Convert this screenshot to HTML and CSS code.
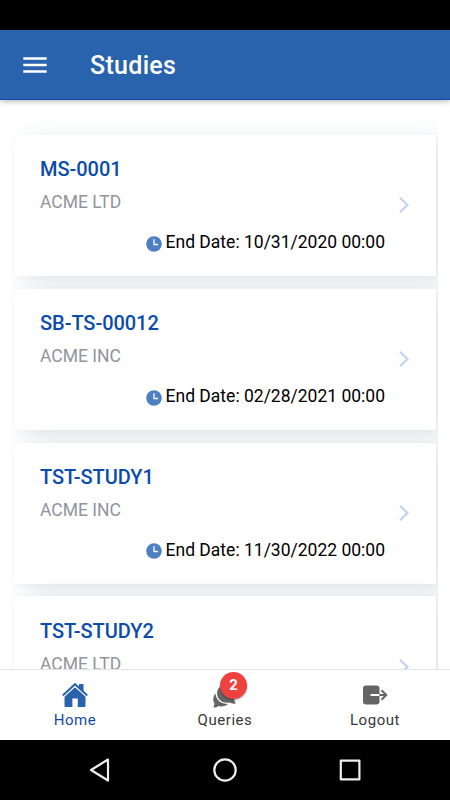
FILE: index.html
```html
<!DOCTYPE html>
<html lang="en">
<head>
  <meta charset="UTF-8" />
  <meta name="viewport" content="width=device-width, initial-scale=1" />
  <title>Studies</title>
  <link rel="stylesheet" href="styles.css">
</head>
<body>
  <div class="app">
    <div class="status-bar"></div>

    <header class="header">
      <button class="menu-btn" aria-label="Menu">
        <svg viewBox="0 0 24 18"><path d="M.3 2.500H23.700M.3 9H23.700M.3 15.500H23.700"/></svg>
      </button>
      <h1>Studies</h1>
    </header>

    <!-- STUDY LIST -->
    <main class="content">
      <div class="list">
        <article class="card">
          <div class="info">
            <h2>MS-0001</h2>
            <p class="company">ACME LTD</p>
            <p class="date"><svg class="clock" viewBox="0 0 16 16"><circle cx="8" cy="8" r="7.8"/><path d="M8 3.2V8.500H12"/></svg><span>End Date: 10/31/2020 00:00</span></p>
          </div>
          <svg class="arrow" viewBox="0 0 12 18"><path d="M2 1.8L9.5 9L2 16.2"/></svg>
        </article>
        <article class="card">
          <div class="info">
            <h2>SB-TS-00012</h2>
            <p class="company">ACME INC</p>
            <p class="date"><svg class="clock" viewBox="0 0 16 16"><circle cx="8" cy="8" r="7.8"/><path d="M8 3.2V8.500H12"/></svg><span>End Date: 02/28/2021 00:00</span></p>
          </div>
          <svg class="arrow" viewBox="0 0 12 18"><path d="M2 1.8L9.5 9L2 16.2"/></svg>
        </article>
        <article class="card">
          <div class="info">
            <h2>TST-STUDY1</h2>
            <p class="company">ACME INC</p>
            <p class="date"><svg class="clock" viewBox="0 0 16 16"><circle cx="8" cy="8" r="7.8"/><path d="M8 3.2V8.500H12"/></svg><span>End Date: 11/30/2022 00:00</span></p>
          </div>
          <svg class="arrow" viewBox="0 0 12 18"><path d="M2 1.8L9.5 9L2 16.2"/></svg>
        </article>
        <article class="card">
          <div class="info">
            <h2>TST-STUDY2</h2>
            <p class="company">ACME LTD</p>
          </div>
          <svg class="arrow" viewBox="0 0 12 18"><path d="M2 1.8L9.5 9L2 16.2"/></svg>
        </article>
      </div>
    </main>

    <!-- TABS -->
    <nav class="tabs">
      <a class="tab active">
        <svg viewBox="0 0 26 26">
          <path d="M17 2H21.500V10L17 6Z"/>
          <path d="M13 5L23.500 14.500V24Q23.500 25 22.500 25H15.800V16.500H10.400V25H3.500Q2.500 25 2.500 24V14.500Z"/>
          <path class="gap" d="M1 15L13 4.200L25 15"/>
          <path class="roof" d="M.8 13.400L13 2.200L25.200 13.400"/>
        </svg>
        <span>Home</span>
      </a>
      <a class="tab">
        <svg viewBox="0 0 26 26">
          <path d="M9 4C14 1 23 3 23 12Q23 15.500 22 17.500L23.700 21.500Q20 22 17.500 20.500C10 22 5 17 5 11Q5 7 9 4Z"/>
          <path d="M3.500 11.500C4 18 9 22 16 22C12.500 25 8 24.700 6.500 24Q4 26 1.500 25.500L2.500 21.500C.5 18.500 1 14 3.500 11.500Z"/>
        </svg>
        <b class="badge">2</b>
        <span>Queries</span>
      </a>
      <a class="tab">
        <svg viewBox="0 0 26 26">
          <rect x="1" y="3.500" width="16.500" height="19" rx="3"/>
          <path class="slot" d="M8.500 13H17.500"/>
          <path class="out" d="M17.500 13H24M19.500 8.200L24.300 13L19.500 17.800"/>
        </svg>
        <span>Logout</span>
      </a>
    </nav>

    <div class="system-nav">
      <svg viewBox="0 0 26 26"><path d="M21 2.500L4 13L21 23.500Z"/></svg>
      <svg viewBox="0 0 26 26"><circle cx="13" cy="13" r="10.700"/></svg>
      <svg viewBox="0 0 26 26"><rect x="3.800" y="3.700" width="18.600" height="18.600"/></svg>
    </div>
  </div>
</body>
</html>
```
FILE: styles.css
```css
* {
  box-sizing: border-box;
}

body {
  margin: 0;
  font-family: Roboto, sans-serif;
  background: #fff;
  color: #000;
}

h1, h2, p {
  margin: 0;
}

.app {
  display: flex;
  flex-direction: column;
  height: 800px;
  overflow: hidden;
}

.status-bar {
  flex: 0 0 30px;
  background: #000;
}

.header {
  position: relative;
  z-index: 1;
  flex: 0 0 70px;
  display: flex;
  align-items: center;
  padding: 1px 0 0 23px;
  background: #2963ae;
  color: #fff;
  border-bottom: 1px solid #0a4cab;
  box-shadow: 0 1px 6px rgba(0, 0, 0, 0.32);
}

.header h1 {
  margin: 1px 0 0 43px;
  font-size: 25px;
  font-weight: 500;
  letter-spacing: 0.3px;
}

.menu-btn {
  width: 24px;
  height: 18px;
  padding: 0;
  border: 0;
  background: none;
}

.menu-btn svg {
  display: block;
  width: 24px;
  height: 18px;
  stroke: #fff;
  stroke-width: 2.600;
}

.content {
  flex: 1;
  min-height: 0;
  overflow: hidden;
  padding: 0 12px;
}

.list {
  display: flex;
  flex-direction: column;
  gap: 12.600px;
  padding: 35px 2px 0;
  overflow: hidden;
}

.card {
  position: relative;
  display: flex;
  justify-content: space-between;
  flex: 0 0 141.200px;
  padding: 21.400px 26px 0;
  background: #fff;
  box-shadow: 12px 5px 26px rgba(40, 70, 90, 0.12), 2px 2px 6px rgba(40, 70, 90, 0.04);
}

.info {
  width: 345px;
}

.card h2 {
  font-size: 20px;
  font-weight: 500;
  line-height: 26px;
  letter-spacing: -0.050px;
  color: #0a4cab;
}

.company {
  margin-top: 8px;
  font-size: 17.500px;
  line-height: 24px;
  color: #92949c;
}

.date {
  display: flex;
  justify-content: flex-end;
  align-items: center;
  gap: 4px;
  margin-top: 16px;
  font-size: 17.500px;
  line-height: 24px;
}

.clock {
  width: 16px;
  height: 16px;
  margin-top: 3px;
  fill: #4c80c2;
}

.clock path {
  fill: none;
  stroke: #fff;
  stroke-width: 1.300;
}

.arrow {
  width: 12px;
  height: 18px;
  margin-top: 40px;
  fill: none;
  stroke: #c4d3ed;
  stroke-width: 2.200;
}

.tabs {
  position: relative;
  z-index: 1;
  flex: 0 0 71px;
  display: grid;
  grid-template-columns: repeat(3, 1fr);
  border-top: 1px solid #e2e4e6;
  background: #fff;
}

.tab {
  position: relative;
  display: flex;
  flex-direction: column;
  align-items: center;
  padding-top: 12px;
  font-size: 15px;
  line-height: 20px;
  letter-spacing: 0.550px;
  color: #383838;
}

.tab svg {
  width: 26px;
  height: 26px;
  margin-bottom: 2px;
  fill: #656565;
}

.tab.active {
  color: #1747a8;
}

.tab.active svg {
  fill: #2963ae;
}

.gap,
.roof,
.slot,
.out {
  fill: none;
  stroke: #fff;
  stroke-width: 2;
}

.gap {
  stroke-width: 1.500;
}

.roof {
  stroke: #2963ae;
}

.out {
  stroke: #656565;
}

.badge {
  position: absolute;
  top: 2px;
  left: 70px;
  width: 27px;
  height: 27px;
  border-radius: 50%;
  background: #f04141;
  color: #fff;
  font-size: 15px;
  line-height: 27px;
  letter-spacing: 0;
  text-align: center;
  box-shadow: 0 1px 2px rgba(0, 0, 0, 0.4);
}

.system-nav {
  flex: 0 0 60px;
  display: flex;
  justify-content: center;
  align-items: center;
  gap: 99px;
  background: #000;
}

.system-nav svg {
  width: 26px;
  height: 26px;
  fill: none;
  stroke: #eee;
  stroke-width: 2.200;
  stroke-linejoin: round;
}
```
